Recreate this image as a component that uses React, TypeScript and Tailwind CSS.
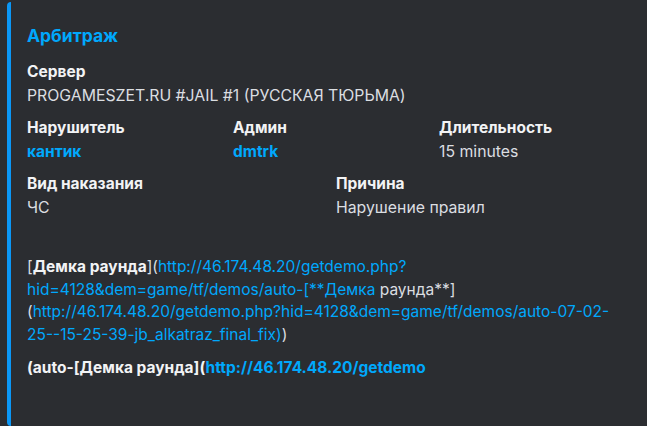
import React from "react";

const font = { fontFamily: 'Inter, "Noto Sans", "Noto Sans CJK SC", sans-serif' };

function Field({ name, value, link }: { name: string; value: string; link?: boolean }) {
  return (
    <div className="min-w-0">
      <div className="mb-[2px] text-[15.5px] font-bold leading-[22px] text-[#f2f3f5]">{name}</div>
      <div
        className={`leading-[22px] ${link ? "text-[15.5px] font-bold text-[#00a8fc]" : "text-[15.8px] text-[#dbdee1]"}`}
      >
        {value}
      </div>
    </div>
  );
}

export default function App() {
  const blue = "text-[#00a8fc]";
  const gray = "text-[#dbdee1]";
  return (
    <div className="h-[426px] w-[647px] overflow-hidden bg-[#2b2d31]" style={font}>
      <div className="ml-[7px] flex h-full pt-[2px]">
        <div className="w-[4px] shrink-0 rounded-l-[4px] bg-[#0b97f6]" />
        <div className="flex-1 pl-4 pt-[22px]">
          <div className={`text-[17.5px] font-bold leading-[24px] ${blue}`}>Арбитраж</div>

          <div className="mt-[13px] grid w-[618px] grid-cols-6 gap-y-[10px]">
            <div className="col-span-6">
              <Field name="Сервер" value="PROGAMESZET.RU #JAIL #1 (РУССКАЯ ТЮРЬМА)" />
            </div>
            <div className="col-span-2">
              <Field name="Нарушитель" value="кантик" link />
            </div>
            <div className="col-span-2">
              <Field name="Админ" value="dmtrk" link />
            </div>
            <div className="col-span-2">
              <Field name="Длительность" value="15 minutes" />
            </div>
            <div className="col-span-3">
              <Field name="Вид наказания" value="ЧС" />
            </div>
            <div className="col-span-3">
              <Field name="Причина" value="Нарушение правил" />
            </div>
          </div>

          <div className="mt-[37px] whitespace-nowrap text-[15.5px] leading-[22.5px]">
            <div>
              <span className={gray}>[</span>
              <span className="font-bold text-[#f2f3f5]">Демка раунда</span>
              <span className={gray}>](</span>
              <span className={blue}>http://46.174.48.20/getdemo.php?</span>
            </div>
            <div>
              <span className={blue}>hid=4128&amp;dem=game/tf/demos/auto-[**Демка</span>
              <span className={gray}> раунда**]</span>
            </div>
            <div>
              <span className={gray}>(</span>
              <span className={blue}>http://46.174.48.20/getdemo.php?hid=4128&amp;dem=game/tf/demos/auto-07-02-</span>
            </div>
            <div>
              <span className={blue}>25--15-25-39-jb_alkatraz_final_fix)</span>
              <span className={gray}>)</span>
            </div>
            <div className="mt-[11px] font-bold">
              <span className="text-[#f2f3f5]">(auto-[Демка раунда](</span>
              <span className={blue}>http://46.174.48.20/getdemo</span>
            </div>
          </div>
        </div>
      </div>
    </div>
  );
}
